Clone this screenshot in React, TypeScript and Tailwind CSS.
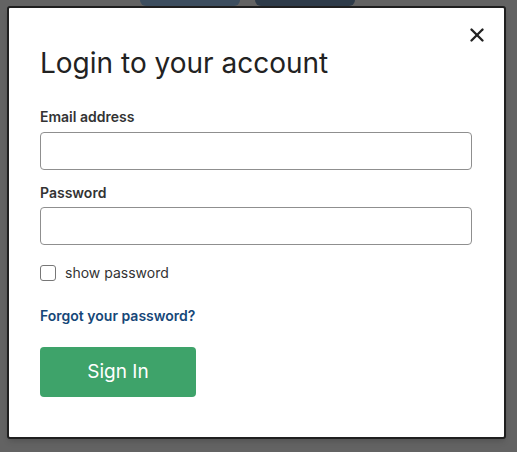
import { X } from "lucide-react";

export default function App() {
  return (
    <div className="min-h-[452px] w-[517px] bg-[#636363] font-['Inter',sans-serif]">
      {/* page content peeking out behind the dialog */}
      <div className="flex h-[6px] gap-[15px] pl-[140px]">
        <div className="h-[6px] w-[100px] rounded-b-[6px] bg-[#3d4e5f]" />
        <div className="h-[6px] w-[100px] rounded-b-[6px] bg-[#2e3b49]" />
      </div>

      {/* Dialog */}
      <div className="ml-[7px] h-[433px] w-[499px] rounded-[3px] border-2 border-[#1f1f1f] bg-white shadow-md">
        <div className="flex justify-end pr-[16px] pt-[16px]">
          <button className="text-[#222]">
            <X size={22} strokeWidth={2.6} />
          </button>
        </div>

        <div className="pl-[31px] pr-[32px]">
          <h2 className="text-[28px] leading-[34px] text-[#222]">Login to your account</h2>

          <form className="mt-[28px] flex flex-col">
            <label className="text-[14px] font-semibold leading-[18px] text-[#333]">Email address</label>
            <input
              type="email"
              className="mt-[6px] h-[38px] w-[432px] rounded-[4px] border border-[#8f8f8f] px-2 outline-none"
            />

            <label className="mt-[14px] text-[14px] font-semibold leading-[18px] text-[#333]">Password</label>
            <input
              type="password"
              className="mt-[5px] h-[38px] w-[432px] rounded-[4px] border border-[#8f8f8f] px-2 outline-none"
            />

            <label className="mt-[19px] flex items-center gap-[9px] text-[14px] leading-[18px] text-[#333]">
              <span className="h-[16px] w-[16px] rounded-[3px] border border-[#777] bg-white" />
              show password
            </label>

            <a href="#" className="mt-[25px] text-[14px] font-semibold leading-[18px] text-[#164778]">
              Forgot your password?
            </a>

            <button
              type="button"
              className="mt-[22px] h-[50px] w-[156px] rounded-[4px] bg-[#3ea36a] text-[19px] text-white"
            >
              Sign In
            </button>
          </form>
        </div>
      </div>
    </div>
  );
}
